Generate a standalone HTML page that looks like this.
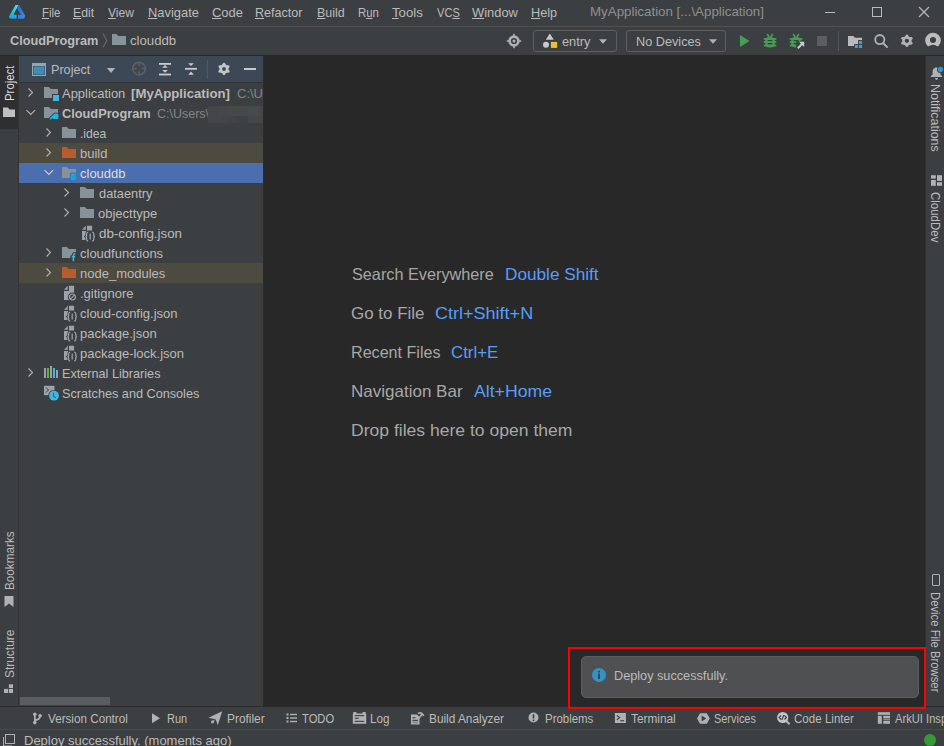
<!DOCTYPE html>
<html><head><meta charset="utf-8"><style>
html,body{margin:0;padding:0}
body{width:944px;height:746px;position:relative;overflow:hidden;background:#3c3f41;font-family:"Liberation Sans", sans-serif}
.r,.t,.s{position:absolute}
.r{box-sizing:border-box}
.t{white-space:nowrap;line-height:1}
.t u{text-decoration:underline;text-underline-offset:1px}
.vl{transform-origin:0 0;transform:rotate(-90deg)}
.vr{transform-origin:0 0;transform:rotate(90deg)}
</style></head><body>
<div class="r" style="left:0;top:0;width:944px;height:26px;background:#3c3f41"></div><div class="r" style="left:0;top:26px;width:944px;height:1px;background:#515151"></div><svg class="s" style="left:0;top:0" width="32" height="26" viewBox="0 0 32 26">
<defs><linearGradient id="lg1" x1="0" y1="0" x2="0" y2="1"><stop offset="0" stop-color="#45e3ee"/><stop offset="1" stop-color="#19a0d8"/></linearGradient>
<linearGradient id="lg2" x1="0" y1="0" x2="1" y2="1"><stop offset="0" stop-color="#2168d8"/><stop offset="1" stop-color="#3a8fe6"/></linearGradient></defs>
<path d="M15.6 5 L18.6 5 L13.4 14.8 L16.6 14.8 L16.6 18.8 L11.2 18.8 Q9 18.8 9 16.6 Z" fill="url(#lg1)"/>
<path d="M18.6 5 L19.2 5 L25 15.6 Q25 18.8 22.8 18.8 L18 18.8 L18 14.8 L21 14.8 L16.9 8.2 Z" fill="url(#lg2)"/>
</svg><div class="t" style="left:42.4px;top:5.80px;font-size:13px;color:#bbbbbb;transform-origin:0 0;transform:scaleX(0.8762);"><u>F</u>ile</div>
<div class="t" style="left:73.1px;top:5.80px;font-size:13px;color:#bbbbbb;transform-origin:0 0;transform:scaleX(0.9435);"><u>E</u>dit</div>
<div class="t" style="left:108.0px;top:5.80px;font-size:13px;color:#bbbbbb;transform-origin:0 0;transform:scaleX(0.9276);"><u>V</u>iew</div>
<div class="t" style="left:147.7px;top:5.80px;font-size:13px;color:#bbbbbb;transform-origin:0 0;transform:scaleX(0.9922);"><u>N</u>avigate</div>
<div class="t" style="left:211.8px;top:5.80px;font-size:13px;color:#bbbbbb;transform-origin:0 0;transform:scaleX(0.9935);"><u>C</u>ode</div>
<div class="t" style="left:255.2px;top:5.80px;font-size:13px;color:#bbbbbb;transform-origin:0 0;transform:scaleX(0.9640);"><u>R</u>efactor</div>
<div class="t" style="left:316.5px;top:5.80px;font-size:13px;color:#bbbbbb;transform-origin:0 0;transform:scaleX(0.9552);"><u>B</u>uild</div>
<div class="t" style="left:357.7px;top:5.80px;font-size:13px;color:#bbbbbb;transform-origin:0 0;transform:scaleX(0.8750);">R<u>u</u>n</div>
<div class="t" style="left:392.0px;top:5.80px;font-size:13px;color:#bbbbbb;transform-origin:0 0;transform:scaleX(1.0161);"><u>T</u>ools</div>
<div class="t" style="left:437.0px;top:5.80px;font-size:13px;color:#bbbbbb;transform-origin:0 0;transform:scaleX(0.8519);">VC<u>S</u></div>
<div class="t" style="left:472.1px;top:5.80px;font-size:13px;color:#bbbbbb;transform-origin:0 0;transform:scaleX(0.9915);"><u>W</u>indow</div>
<div class="t" style="left:531.1px;top:5.80px;font-size:13px;color:#bbbbbb;transform-origin:0 0;transform:scaleX(0.9741);"><u>H</u>elp</div>
<div class="t" style="left:589.5px;top:4.70px;font-size:13px;color:#8f8f8f;transform-origin:0 0;transform:scaleX(1.0245);">MyApplication [...\Application]</div>
<div class="r" style="left:825px;top:12px;width:10px;height:1px;background:#bbbbbb"></div><div class="r" style="left:872px;top:7px;width:10px;height:10px;border:1px solid #bbbbbb"></div><svg class="s" style="left:918px;top:6px" width="12" height="12" viewBox="0 0 12 12"><path d="M1 1 L11 11 M11 1 L1 11" stroke="#bbbbbb" stroke-width="1.1"/></svg><div class="r" style="left:0;top:27px;width:944px;height:28px;background:#3c3f41"></div><div class="t" style="left:9.5px;top:34.20px;font-size:13px;color:#bbbbbb;font-weight:bold;transform-origin:0 0;transform:scaleX(0.9778);">CloudProgram</div>
<svg class="s" style="left:100px;top:32px" width="10" height="18" viewBox="0 0 10 18"><path d="M3 1.5 L6.8 8.5 L3 15.5" fill="none" stroke="#64686b" stroke-width="1.2"/></svg><svg class="s" style="left:112px;top:34px" width="14" height="11" viewBox="0 0 14 11"><path d="M0 0 H4.5 L6.2 2 H14 V11 H0 Z" fill="#87939a"/></svg><div class="t" style="left:130.3px;top:34.20px;font-size:13px;color:#bbbbbb;transform-origin:0 0;transform:scaleX(1.0130);">clouddb</div>
<svg class="s" style="left:506px;top:33px" width="16" height="16" viewBox="0 0 16 16">
<circle cx="8" cy="8" r="4.4" fill="none" stroke="#afb1b3" stroke-width="2.6"/><circle cx="8" cy="8" r="1.5" fill="#afb1b3"/>
<rect x="7.2" y="0.8" width="1.6" height="2" fill="#afb1b3"/><rect x="7.2" y="13.2" width="1.6" height="2" fill="#afb1b3"/>
<rect x="0.8" y="7.2" width="2" height="1.6" fill="#afb1b3"/><rect x="13.2" y="7.2" width="2" height="1.6" fill="#afb1b3"/></svg><div class="r" style="left:533px;top:30px;width:84px;height:22px;border:1px solid #5e6060;border-radius:3px"></div><svg class="s" style="left:540px;top:32px" width="20" height="18" viewBox="0 0 20 18">
<path d="M9.8 1.6 L13.8 7.8 L5.8 7.8 Z" fill="#c9c9c9"/><circle cx="6" cy="12.8" r="3" fill="#c9c9c9"/><rect x="10.9" y="9.9" width="6.2" height="6" fill="#eec22e"/></svg><div class="t" style="left:562.3px;top:35.30px;font-size:13px;color:#bbbbbb;transform-origin:0 0;transform:scaleX(0.9828);">entry</div>
<svg class="s" style="left:598px;top:38px" width="10" height="7" viewBox="0 0 10 7"><path d="M1 1.2 H9 L5 5.8 Z" fill="#afb1b3"/></svg><div class="r" style="left:626px;top:30px;width:100px;height:22px;border:1px solid #5e6060;border-radius:3px"></div><div class="t" style="left:635.5px;top:35.30px;font-size:13px;color:#bbbbbb;transform-origin:0 0;transform:scaleX(0.9761);">No Devices</div>
<svg class="s" style="left:708px;top:38px" width="10" height="7" viewBox="0 0 10 7"><path d="M1 1.2 H9 L5 5.8 Z" fill="#afb1b3"/></svg><svg class="s" style="left:738px;top:33px" width="14" height="16" viewBox="0 0 14 16"><path d="M2 1.9 L11.5 8 L2 13.9 Z" fill="#499c54"/></svg><svg class="s" style="left:763px;top:33px" width="14" height="15" viewBox="0 0 14 15"><path d="M4.2 1 L6.2 4 M9.8 1 L7.8 4" stroke="#499c54" stroke-width="1.7"/>
<path d="M2.3 7 Q2.3 4 7 4 Q11.7 4 11.7 7 V11.5 Q11.7 14.5 7 14.5 Q2.3 14.5 2.3 11.5 Z" fill="#499c54"/>
<rect x="0.8" y="5.1" width="12.5" height="1.8" fill="#499c54"/><rect x="0.8" y="8.1" width="12.5" height="1.8" fill="#499c54"/><rect x="0.8" y="11.6" width="12.5" height="1.8" fill="#499c54"/>
<rect x="4.6" y="7" width="4.8" height="1.1" fill="#3c3f41"/><rect x="4.6" y="10" width="4.8" height="1.4" fill="#3c3f41"/></svg><svg class="s" style="left:789px;top:33px" width="18" height="17" viewBox="0 0 18 17"><path d="M4.2 1 L6.2 4 M9.8 1 L7.8 4" stroke="#499c54" stroke-width="1.7"/>
<path d="M2.3 7 Q2.3 4 7 4 Q11.7 4 11.7 7 V11.5 Q11.7 14.5 7 14.5 Q2.3 14.5 2.3 11.5 Z" fill="#499c54"/>
<rect x="0.8" y="5.1" width="12.5" height="1.8" fill="#499c54"/><rect x="0.8" y="8.1" width="12.5" height="1.8" fill="#499c54"/><rect x="0.8" y="11.6" width="12.5" height="1.8" fill="#499c54"/>
<rect x="4.6" y="7" width="4.8" height="1.1" fill="#3c3f41"/><rect x="4.6" y="10" width="4.8" height="1.4" fill="#3c3f41"/><path d="M7.2 8.2 H17 V17 H7.2 Z" fill="#3c3f41"/><path d="M8.8 15.2 L13.8 10.2" stroke="#c9c9c9" stroke-width="2"/><path d="M10 8.8 H15.2 V14 Z" fill="#c9c9c9"/></svg><div class="r" style="left:817px;top:36px;width:10px;height:10px;background:#5a5c5e"></div><div class="r" style="left:838px;top:31px;width:1px;height:20px;background:#54575a"></div><svg class="s" style="left:847px;top:35px" width="16" height="14" viewBox="0 0 16 14">
<path d="M1 0.9 H6.5 L7.8 2.8 H15.1 V4.9 H11.1 V8.9 H7.1 V11 H1 Z" fill="#b9babb"/>
<rect x="12" y="5.9" width="3.1" height="3" fill="#389fd6"/><rect x="7.9" y="9.9" width="3.1" height="3.1" fill="#389fd6"/><rect x="12" y="9.9" width="3.1" height="3.1" fill="#389fd6"/></svg><svg class="s" style="left:872px;top:33px" width="18" height="17" viewBox="0 0 18 17"><circle cx="7.8" cy="6.6" r="4.6" fill="none" stroke="#afb1b3" stroke-width="1.8"/><path d="M11 10 L15.6 14.6" stroke="#afb1b3" stroke-width="2"/></svg><svg class="s" style="left:898px;top:33px" width="18" height="16" viewBox="0 0 18 16"><circle cx="8.9" cy="7.8" r="4.72" fill="#afb1b3"/><circle cx="8.90" cy="2.89" r="1.39" fill="#afb1b3"/><path d="M8.90 7.80 L8.90 2.89" stroke="#afb1b3" stroke-width="2.77"/><circle cx="13.16" cy="5.34" r="1.39" fill="#afb1b3"/><path d="M8.90 7.80 L13.16 5.34" stroke="#afb1b3" stroke-width="2.77"/><circle cx="13.16" cy="10.26" r="1.39" fill="#afb1b3"/><path d="M8.90 7.80 L13.16 10.26" stroke="#afb1b3" stroke-width="2.77"/><circle cx="8.90" cy="12.71" r="1.39" fill="#afb1b3"/><path d="M8.90 7.80 L8.90 12.71" stroke="#afb1b3" stroke-width="2.77"/><circle cx="4.64" cy="10.26" r="1.39" fill="#afb1b3"/><path d="M8.90 7.80 L4.64 10.26" stroke="#afb1b3" stroke-width="2.77"/><circle cx="4.64" cy="5.34" r="1.39" fill="#afb1b3"/><path d="M8.90 7.80 L4.64 5.34" stroke="#afb1b3" stroke-width="2.77"/><circle cx="8.9" cy="7.8" r="2.1" fill="#3c3f41"/></svg><svg class="s" style="left:924px;top:32px" width="20" height="17" viewBox="0 0 20 17">
<circle cx="9" cy="8.6" r="7.8" fill="#bdbdbd"/><circle cx="9" cy="7.9" r="3" fill="#3c3f41"/>
<path d="M0 17 V14.6 H4.3 Q9 10.7 13.7 14.6 H18 V17 Z" fill="#3c3f41"/></svg><div class="r" style="left:0;top:55px;width:944px;height:1px;background:#282828"></div><div class="r" style="left:0;top:56px;width:18px;height:650px;background:#3c3f41"></div><div class="r" style="left:0;top:56px;width:18px;height:73px;background:#2d2f30"></div><div class="r" style="left:18px;top:56px;width:1px;height:650px;background:#323232"></div><div class="t" style="left:4px;top:101.00px;font-size:12px;color:#dedede;transform-origin:0 0;transform:rotate(-90deg) scaleX(0.9500)">Project</div>
<svg class="s" style="left:2px;top:106px" width="14" height="12" viewBox="0 0 14 12"><path d="M1 1.5 H6 L7.5 3.5 H13 V11 H1 Z" fill="#bfbfbf"/></svg><div class="t" style="left:3.5px;top:589.80px;font-size:12px;color:#bbbbbb;transform-origin:0 0;transform:rotate(-90deg) scaleX(0.9767)">Bookmarks</div>
<svg class="s" style="left:3px;top:595px" width="12" height="13" viewBox="0 0 12 13"><path d="M1.5 1 H10.5 V12 L6 8.5 L1.5 12 Z" fill="#afb1b3"/></svg><div class="t" style="left:3.5px;top:678.40px;font-size:12px;color:#bbbbbb;transform-origin:0 0;transform:rotate(-90deg) scaleX(0.9939)">Structure</div>
<svg class="s" style="left:3px;top:682px" width="12" height="12" viewBox="0 0 12 12"><rect x="5.9" y="2.3" width="4.1" height="3.7" fill="#afb1b3"/><rect x="1" y="6.9" width="4.1" height="4.1" fill="#afb1b3"/><rect x="5.9" y="6.9" width="4.1" height="4.1" fill="#afb1b3"/></svg><div class="r" style="left:19px;top:56px;width:244px;height:26px;background:#3d4856"></div><div class="r" style="left:19px;top:82px;width:244px;height:1px;background:#2f3133"></div><div class="r" style="left:19px;top:83px;width:244px;height:623px;background:#3c3f41"></div><div class="r" style="left:263px;top:56px;width:1px;height:650px;background:#2b2b2b"></div><svg class="s" style="left:31px;top:62px" width="16" height="15" viewBox="0 0 16 15"><rect x="1" y="1" width="14" height="13" fill="#9aa4ab"/><rect x="2" y="4" width="12" height="9" fill="#3d4856"/><rect x="2.5" y="4.5" width="11" height="8" fill="#3d8fb5"/></svg><div class="t" style="left:51.4px;top:62.80px;font-size:13px;color:#bbbbbb;transform-origin:0 0;transform:scaleX(0.9707);">Project</div>
<svg class="s" style="left:106px;top:67px" width="10" height="7" viewBox="0 0 10 7"><path d="M0.8 1 H9.2 L5 6 Z" fill="#afb1b3"/></svg><svg class="s" style="left:131px;top:61px" width="16" height="16" viewBox="0 0 16 16"><circle cx="8" cy="7.6" r="6.3" fill="none" stroke="#606060" stroke-width="1.5"/>
<path d="M8 1.3 V5 M8 10.2 V13.9 M1.7 7.6 H5.4 M10.6 7.6 H14.3" stroke="#606060" stroke-width="1.5"/></svg><svg class="s" style="left:158px;top:61px" width="14" height="16" viewBox="0 0 14 16"><rect x="1" y="2" width="12" height="1.8" fill="#c9c9c9"/><rect x="1" y="12.6" width="12" height="1.8" fill="#c9c9c9"/>
<path d="M4.2 6.8 L7 4.1 L9.8 6.8 Z M4.2 9 L7 11.7 L9.8 9 Z" fill="#c9c9c9"/></svg><svg class="s" style="left:184px;top:61px" width="14" height="16" viewBox="0 0 14 16"><rect x="1" y="6.9" width="12" height="1.8" fill="#c9c9c9"/>
<path d="M4.2 2.2 L7 5.1 L9.8 2.2 Z M4.2 13.7 L7 10.6 L9.8 13.7 Z" fill="#c9c9c9"/></svg><div class="r" style="left:207px;top:60px;width:1px;height:19px;background:#56585a"></div><svg class="s" style="left:215px;top:60px" width="18" height="17" viewBox="0 0 18 17"><circle cx="9" cy="9" r="4.65" fill="#c4c5c6"/><circle cx="9.00" cy="4.16" r="1.36" fill="#c4c5c6"/><path d="M9.00 9.00 L9.00 4.16" stroke="#c4c5c6" stroke-width="2.73"/><circle cx="13.19" cy="6.58" r="1.36" fill="#c4c5c6"/><path d="M9.00 9.00 L13.19 6.58" stroke="#c4c5c6" stroke-width="2.73"/><circle cx="13.19" cy="11.42" r="1.36" fill="#c4c5c6"/><path d="M9.00 9.00 L13.19 11.42" stroke="#c4c5c6" stroke-width="2.73"/><circle cx="9.00" cy="13.84" r="1.36" fill="#c4c5c6"/><path d="M9.00 9.00 L9.00 13.84" stroke="#c4c5c6" stroke-width="2.73"/><circle cx="4.81" cy="11.42" r="1.36" fill="#c4c5c6"/><path d="M9.00 9.00 L4.81 11.42" stroke="#c4c5c6" stroke-width="2.73"/><circle cx="4.81" cy="6.58" r="1.36" fill="#c4c5c6"/><path d="M9.00 9.00 L4.81 6.58" stroke="#c4c5c6" stroke-width="2.73"/><circle cx="9" cy="9" r="1.9" fill="#3d4856"/></svg><div class="r" style="left:244px;top:68px;width:12px;height:2px;background:#c9c9c9"></div><div class="r" style="left:19px;top:143px;width:244px;height:20px;background:#4d4a40"></div><div class="r" style="left:19px;top:263px;width:244px;height:20px;background:#4d4a40"></div><div class="r" style="left:19px;top:163px;width:244px;height:20px;background:#4b6eaf"></div><svg class="s" style="left:27px;top:83px" width="10" height="20" viewBox="0 0 10 20"><path d="M1.5 5.5 L5.5 9.5 L1.5 13.5" fill="none" stroke="#afb1b3" stroke-width="1.1"/></svg><svg class="s" style="left:44px;top:87px" width="16" height="15" viewBox="0 0 16 15"><path d="M0 0 H4.9 L6.9 2 H14 V11 H0 Z" fill="#87939a"/><rect x="8" y="7" width="7" height="7" fill="#3c3f41"/><rect x="9" y="8" width="6" height="6" fill="#40b6e0"/></svg><div class="t" style="left:62.2px;top:87.20px;font-size:13px;color:#bbbbbb;transform-origin:0 0;transform:scaleX(0.9953);">Application</div>
<div class="t" style="left:131.3px;top:87.20px;font-size:13px;color:#bbbbbb;font-weight:bold;transform-origin:0 0;transform:scaleX(1.0144);">[MyApplication]</div>
<div class="t" style="left:237px;top:87.20px;font-size:13px;color:#858585;">C:\U</div>
<svg class="s" style="left:25px;top:103px" width="12" height="20" viewBox="0 0 12 20"><path d="M1.5 7.2 L5.8 11.5 L10.1 7.2" fill="none" stroke="#afb1b3" stroke-width="1.1"/></svg><svg class="s" style="left:44px;top:107px" width="16" height="15" viewBox="0 0 16 15"><path d="M0 0 H4.9 L6.9 2 H14 V11 H0 Z" fill="#87939a"/><g fill="#3c3f41" stroke="#3c3f41" stroke-linecap="round"><path d="M6.4 11.8 L9.6 8.6" stroke-width="3.4"/><circle cx="12" cy="8.8" r="2.6" stroke-width="1.6"/><circle cx="9.6" cy="10.3" r="1.7" stroke-width="1.6"/></g><g fill="#18b8e6" stroke-linecap="round"><path d="M6.4 11.8 L9.6 8.6" stroke="#18b8e6" stroke-width="1.6"/><circle cx="12" cy="8.8" r="2.6"/><circle cx="9.6" cy="10.3" r="1.7"/><path d="M9.6 10.3 H14.3 V12 H9.6 Z"/></g></svg><div class="t" style="left:62.0px;top:107.20px;font-size:13px;color:#bbbbbb;font-weight:bold;transform-origin:0 0;transform:scaleX(0.9811);">CloudProgram</div>
<div class="t" style="left:157.3px;top:107.20px;font-size:13px;color:#858585;transform-origin:0 0;transform:scaleX(0.9599);">C:\Users\</div>
<div class="r" style="left:208px;top:106px;width:10px;height:10px;background:#434546"></div><div class="r" style="left:208px;top:116px;width:10px;height:7px;background:#434546"></div><div class="r" style="left:218px;top:106px;width:10px;height:10px;background:#45484a"></div><div class="r" style="left:218px;top:116px;width:10px;height:7px;background:#434647"></div><div class="r" style="left:228px;top:106px;width:10px;height:10px;background:#46494a"></div><div class="r" style="left:228px;top:116px;width:10px;height:7px;background:#414243"></div><div class="r" style="left:238px;top:106px;width:10px;height:10px;background:#46494b"></div><div class="r" style="left:238px;top:116px;width:10px;height:7px;background:#3e4143"></div><div class="r" style="left:248px;top:106px;width:10px;height:10px;background:#484b4c"></div><div class="r" style="left:248px;top:116px;width:10px;height:7px;background:#444749"></div><div class="r" style="left:258px;top:106px;width:5px;height:10px;background:#454749"></div><div class="r" style="left:258px;top:116px;width:5px;height:7px;background:#434546"></div><svg class="s" style="left:45px;top:123px" width="10" height="20" viewBox="0 0 10 20"><path d="M1.5 5.5 L5.5 9.5 L1.5 13.5" fill="none" stroke="#afb1b3" stroke-width="1.1"/></svg><svg class="s" style="left:62px;top:127px" width="16" height="15" viewBox="0 0 16 15"><path d="M0 0 H4.9 L6.9 2 H14 V11 H0 Z" fill="#87939a"/></svg><div class="t" style="left:80.4px;top:127.20px;font-size:13px;color:#bbbbbb;transform-origin:0 0;transform:scaleX(0.9310);">.idea</div>
<svg class="s" style="left:45px;top:143px" width="10" height="20" viewBox="0 0 10 20"><path d="M1.5 5.5 L5.5 9.5 L1.5 13.5" fill="none" stroke="#afb1b3" stroke-width="1.1"/></svg><svg class="s" style="left:62px;top:147px" width="16" height="15" viewBox="0 0 16 15"><path d="M0 0 H4.9 L6.9 2 H14 V11 H0 Z" fill="#b85b2e"/></svg><div class="t" style="left:80px;top:147.20px;font-size:13px;color:#bbbbbb;">build</div>
<svg class="s" style="left:43px;top:163px" width="12" height="20" viewBox="0 0 12 20"><path d="M1.5 7.2 L5.8 11.5 L10.1 7.2" fill="none" stroke="#d0d0d0" stroke-width="1.1"/></svg><svg class="s" style="left:62px;top:167px" width="16" height="15" viewBox="0 0 16 15"><path d="M0 0 H4.9 L6.9 2 H14 V11 H0 Z" fill="#87939a"/><rect x="7.8" y="5.6" width="7.2" height="8.4" rx="2" fill="#4b6eaf"/><ellipse cx="11.3" cy="7.9" rx="2.5" ry="1.2" fill="#00b7e8"/><rect x="8.8" y="7.9" width="5" height="4.1" fill="#00b7e8"/><ellipse cx="11.3" cy="12" rx="2.5" ry="1.1" fill="#00b7e8"/><path d="M8.9 9 Q11.3 10.3 13.7 9 M8.9 10.7 Q11.3 12 13.7 10.7" fill="none" stroke="#4b6eaf" stroke-width="0.6" opacity="0.6"/></svg><div class="t" style="left:80px;top:167.20px;font-size:13px;color:#dddddd;">clouddb</div>
<svg class="s" style="left:63px;top:183px" width="10" height="20" viewBox="0 0 10 20"><path d="M1.5 5.5 L5.5 9.5 L1.5 13.5" fill="none" stroke="#afb1b3" stroke-width="1.1"/></svg><svg class="s" style="left:80px;top:187px" width="16" height="15" viewBox="0 0 16 15"><path d="M0 0 H4.9 L6.9 2 H14 V11 H0 Z" fill="#87939a"/></svg><div class="t" style="left:98.7px;top:187.20px;font-size:13px;color:#bbbbbb;transform-origin:0 0;transform:scaleX(0.9855);">dataentry</div>
<svg class="s" style="left:63px;top:203px" width="10" height="20" viewBox="0 0 10 20"><path d="M1.5 5.5 L5.5 9.5 L1.5 13.5" fill="none" stroke="#afb1b3" stroke-width="1.1"/></svg><svg class="s" style="left:80px;top:207px" width="16" height="15" viewBox="0 0 16 15"><path d="M0 0 H4.9 L6.9 2 H14 V11 H0 Z" fill="#87939a"/></svg><div class="t" style="left:98px;top:207.20px;font-size:13px;color:#bbbbbb;">objecttype</div>
<svg class="s" style="left:81px;top:225px" width="17" height="18" viewBox="0 0 17 18"><path d="M6 0.8 H11.1 V15 H1 V6 H6 Z" fill="#9aa3a9"/><path d="M1 4.8 L4.8 0.8 V4.8 Z" fill="#9aa3a9"/><path d="M7.2 5.6 H11.2 Q14 5.6 14 9 V10 L15.6 11.5 L14 13 V14 Q14 17.4 11.2 17.4 H7.2 Q4.4 17.4 4.4 14 V13 L2.8 11.5 L4.4 10 V9 Q4.4 5.6 7.2 5.6 Z" fill="#3c3f41"/><path d="M7.2 7 Q5.6 7 5.6 9 V10.5 Q5.6 11.5 4.4 11.5 Q5.6 11.5 5.6 12.5 V14 Q5.6 16 7.2 16 M11.2 7 Q12.8 7 12.8 9 V10.5 Q12.8 11.5 14 11.5 Q12.8 11.5 12.8 12.5 V14 Q12.8 16 11.2 16 M9.2 8.6 V14.4" fill="none" stroke="#9aa3a9" stroke-width="1.25"/></svg><div class="t" style="left:98.7px;top:227.20px;font-size:13px;color:#bbbbbb;transform-origin:0 0;transform:scaleX(1.0259);">db-config.json</div>
<svg class="s" style="left:45px;top:243px" width="10" height="20" viewBox="0 0 10 20"><path d="M1.5 5.5 L5.5 9.5 L1.5 13.5" fill="none" stroke="#afb1b3" stroke-width="1.1"/></svg><svg class="s" style="left:62px;top:247px" width="16" height="15" viewBox="0 0 16 15"><path d="M0 0 H4.9 L6.9 2 H14 V11 H0 Z" fill="#87939a"/><path d="M11.4 14.2 V9 Q11.4 6.8 13.4 6.8 M9.8 9.7 H13.2" fill="none" stroke="#3c3f41" stroke-width="3.4" stroke-linecap="round"/><path d="M11.4 14.2 V9 Q11.4 6.8 13.4 6.8 M9.8 9.7 H13.2" fill="none" stroke="#40b6e0" stroke-width="1.5"/></svg><div class="t" style="left:80px;top:247.20px;font-size:13px;color:#bbbbbb;">cloudfunctions</div>
<svg class="s" style="left:45px;top:263px" width="10" height="20" viewBox="0 0 10 20"><path d="M1.5 5.5 L5.5 9.5 L1.5 13.5" fill="none" stroke="#afb1b3" stroke-width="1.1"/></svg><svg class="s" style="left:62px;top:267px" width="16" height="15" viewBox="0 0 16 15"><path d="M0 0 H4.9 L6.9 2 H14 V11 H0 Z" fill="#b85b2e"/></svg><div class="t" style="left:80px;top:267.20px;font-size:13px;color:#bbbbbb;">node_modules</div>
<svg class="s" style="left:63px;top:285px" width="17" height="18" viewBox="0 0 17 18"><path d="M6 0.8 H11.1 V15 H1 V6 H6 Z" fill="#9aa3a9"/><path d="M1 4.8 L4.8 0.8 V4.8 Z" fill="#9aa3a9"/><circle cx="9.4" cy="12" r="4.6" fill="#3c3f41"/><circle cx="9.4" cy="12" r="3" fill="none" stroke="#9aa3a9" stroke-width="1.2"/><path d="M7.3 14.1 L11.5 9.9" stroke="#9aa3a9" stroke-width="1.2"/></svg><div class="t" style="left:80px;top:287.20px;font-size:13px;color:#bbbbbb;">.gitignore</div>
<svg class="s" style="left:63px;top:305px" width="17" height="18" viewBox="0 0 17 18"><path d="M6 0.8 H11.1 V15 H1 V6 H6 Z" fill="#9aa3a9"/><path d="M1 4.8 L4.8 0.8 V4.8 Z" fill="#9aa3a9"/><path d="M7.2 5.6 H11.2 Q14 5.6 14 9 V10 L15.6 11.5 L14 13 V14 Q14 17.4 11.2 17.4 H7.2 Q4.4 17.4 4.4 14 V13 L2.8 11.5 L4.4 10 V9 Q4.4 5.6 7.2 5.6 Z" fill="#3c3f41"/><path d="M7.2 7 Q5.6 7 5.6 9 V10.5 Q5.6 11.5 4.4 11.5 Q5.6 11.5 5.6 12.5 V14 Q5.6 16 7.2 16 M11.2 7 Q12.8 7 12.8 9 V10.5 Q12.8 11.5 14 11.5 Q12.8 11.5 12.8 12.5 V14 Q12.8 16 11.2 16 M9.2 8.6 V14.4" fill="none" stroke="#9aa3a9" stroke-width="1.25"/></svg><div class="t" style="left:80px;top:307.20px;font-size:13px;color:#bbbbbb;">cloud-config.json</div>
<svg class="s" style="left:63px;top:325px" width="17" height="18" viewBox="0 0 17 18"><path d="M6 0.8 H11.1 V15 H1 V6 H6 Z" fill="#9aa3a9"/><path d="M1 4.8 L4.8 0.8 V4.8 Z" fill="#9aa3a9"/><path d="M7.2 5.6 H11.2 Q14 5.6 14 9 V10 L15.6 11.5 L14 13 V14 Q14 17.4 11.2 17.4 H7.2 Q4.4 17.4 4.4 14 V13 L2.8 11.5 L4.4 10 V9 Q4.4 5.6 7.2 5.6 Z" fill="#3c3f41"/><path d="M7.2 7 Q5.6 7 5.6 9 V10.5 Q5.6 11.5 4.4 11.5 Q5.6 11.5 5.6 12.5 V14 Q5.6 16 7.2 16 M11.2 7 Q12.8 7 12.8 9 V10.5 Q12.8 11.5 14 11.5 Q12.8 11.5 12.8 12.5 V14 Q12.8 16 11.2 16 M9.2 8.6 V14.4" fill="none" stroke="#9aa3a9" stroke-width="1.25"/></svg><div class="t" style="left:80px;top:327.20px;font-size:13px;color:#bbbbbb;">package.json</div>
<svg class="s" style="left:63px;top:345px" width="17" height="18" viewBox="0 0 17 18"><path d="M6 0.8 H11.1 V15 H1 V6 H6 Z" fill="#9aa3a9"/><path d="M1 4.8 L4.8 0.8 V4.8 Z" fill="#9aa3a9"/><path d="M7.2 5.6 H11.2 Q14 5.6 14 9 V10 L15.6 11.5 L14 13 V14 Q14 17.4 11.2 17.4 H7.2 Q4.4 17.4 4.4 14 V13 L2.8 11.5 L4.4 10 V9 Q4.4 5.6 7.2 5.6 Z" fill="#3c3f41"/><path d="M7.2 7 Q5.6 7 5.6 9 V10.5 Q5.6 11.5 4.4 11.5 Q5.6 11.5 5.6 12.5 V14 Q5.6 16 7.2 16 M11.2 7 Q12.8 7 12.8 9 V10.5 Q12.8 11.5 14 11.5 Q12.8 11.5 12.8 12.5 V14 Q12.8 16 11.2 16 M9.2 8.6 V14.4" fill="none" stroke="#9aa3a9" stroke-width="1.25"/></svg><div class="t" style="left:80px;top:347.20px;font-size:13px;color:#bbbbbb;">package-lock.json</div>
<svg class="s" style="left:27px;top:363px" width="10" height="20" viewBox="0 0 10 20"><path d="M1.5 5.5 L5.5 9.5 L1.5 13.5" fill="none" stroke="#afb1b3" stroke-width="1.1"/></svg><svg class="s" style="left:43px;top:365px" width="17" height="14" viewBox="0 0 17 14">
<rect x="1" y="3" width="2" height="10" fill="#9aa2a8"/><rect x="4" y="3" width="2" height="10" fill="#62b543"/><rect x="7" y="1" width="2" height="12" fill="#9aa2a8"/><rect x="10" y="3" width="2" height="10" fill="#40b6e0"/><rect x="13" y="5" width="2" height="8" fill="#9aa2a8"/></svg><div class="t" style="left:62.4px;top:367.20px;font-size:13px;color:#bbbbbb;transform-origin:0 0;transform:scaleX(0.9735);">External Libraries</div>
<svg class="s" style="left:43px;top:385px" width="18" height="17" viewBox="0 0 18 17">
<rect x="1" y="0.8" width="10.5" height="9.4" fill="#9aa4ab"/><path d="M3 2.5 L5.5 5 L3 7.5" fill="none" stroke="#3c3f41" stroke-width="1"/>
<circle cx="11" cy="10.7" r="5.8" fill="#3c3f41"/><circle cx="11" cy="10.7" r="4.9" fill="#40b6e0"/><path d="M10.5 7.8 V11.2 L12.8 13" fill="none" stroke="#2e6f8a" stroke-width="1.1"/></svg><div class="t" style="left:62.4px;top:387.20px;font-size:13px;color:#bbbbbb;transform-origin:0 0;transform:scaleX(0.9745);">Scratches and Consoles</div>
<div class="r" style="left:20px;top:697px;width:90px;height:8px;background:#5a5d5f"></div><div class="r" style="left:264px;top:56px;width:661px;height:650px;background:#282828"></div><div class="t" style="left:351.9px;top:265.53px;font-size:16.5px;color:#a7a7a7;transform-origin:0 0;transform:scaleX(0.9847);">Search Everywhere</div>
<div class="t" style="left:504.7px;top:265.53px;font-size:16.5px;color:#589df6;transform-origin:0 0;transform:scaleX(1.0411);">Double Shift</div>
<div class="t" style="left:351.0px;top:304.63px;font-size:16.5px;color:#a7a7a7;transform-origin:0 0;transform:scaleX(1.0264);">Go to File</div>
<div class="t" style="left:435.3px;top:304.63px;font-size:16.5px;color:#589df6;transform-origin:0 0;transform:scaleX(1.0922);">Ctrl+Shift+N</div>
<div class="t" style="left:351.0px;top:343.83px;font-size:16.5px;color:#a7a7a7;transform-origin:0 0;transform:scaleX(0.9761);">Recent Files</div>
<div class="t" style="left:451.0px;top:343.83px;font-size:16.5px;color:#589df6;transform-origin:0 0;transform:scaleX(1.0196);">Ctrl+E</div>
<div class="t" style="left:351.0px;top:382.83px;font-size:16.5px;color:#a7a7a7;transform-origin:0 0;transform:scaleX(1.0312);">Navigation Bar</div>
<div class="t" style="left:473.9px;top:382.83px;font-size:16.5px;color:#589df6;transform-origin:0 0;transform:scaleX(1.0699);">Alt+Home</div>
<div class="t" style="left:351.0px;top:421.93px;font-size:16.5px;color:#a7a7a7;transform-origin:0 0;transform:scaleX(1.0635);">Drop files here to open them</div>
<div class="r" style="left:925px;top:56px;width:1px;height:650px;background:#323232"></div><div class="r" style="left:926px;top:56px;width:18px;height:650px;background:#3c3f41"></div><svg class="s" style="left:929px;top:66px" width="15" height="15" viewBox="0 0 15 15"><path d="M7.5 1.6 C4.6 1.6 3.6 4 3.6 6.5 V8.6 L1.8 10.3 V11 H13.2 V10.3 L11.4 8.6 V6.5 C11.4 4 10.4 1.6 7.5 1.6 Z" fill="#afb1b3"/><path d="M6 12.1 H9 Q9 13.9 7.5 13.9 Q6 13.9 6 12.1 Z" fill="#afb1b3"/><circle cx="11.5" cy="3.4" r="3.5" fill="#3c3f41"/><circle cx="11.5" cy="3.4" r="2.6" fill="#3592c4"/></svg><div class="t" style="left:941px;top:84.40px;font-size:12px;color:#bbbbbb;transform-origin:0 0;transform:rotate(90deg) scaleX(1.0354)">Notifications</div>
<svg class="s" style="left:930px;top:174px" width="13" height="13" viewBox="0 0 13 13"><rect x="1" y="1.2" width="4.8" height="3.4" fill="#afb1b3"/><rect x="7" y="1.2" width="5" height="5.7" fill="#afb1b3"/><rect x="1" y="6" width="4.8" height="5.8" fill="#afb1b3"/><rect x="7" y="8.2" width="5" height="3.6" fill="#afb1b3"/></svg><div class="t" style="left:941px;top:191.80px;font-size:12px;color:#bbbbbb;transform-origin:0 0;transform:rotate(90deg) scaleX(0.9566)">CloudDev</div>
<div class="r" style="left:932px;top:574px;width:8px;height:12px;border:1px solid #afb1b3;border-radius:1px"></div><div class="t" style="left:941px;top:592.30px;font-size:12px;color:#bbbbbb;transform-origin:0 0;transform:rotate(90deg) scaleX(0.9411)">Device File Browser</div>
<div class="r" style="left:581px;top:656px;width:338px;height:42px;background:#4e5052;border:1px solid #5a5c5e;border-radius:5px"></div><svg class="s" style="left:591px;top:667px" width="16" height="16" viewBox="0 0 16 16"><circle cx="8" cy="8" r="7" fill="#3592c4"/><rect x="7.1" y="6.6" width="1.8" height="5.4" fill="#3c3f41"/><rect x="7.1" y="3.8" width="1.8" height="1.8" fill="#3c3f41"/></svg><div class="t" style="left:613.6px;top:668.80px;font-size:13px;color:#bbbbbb;transform-origin:0 0;transform:scaleX(0.9761);">Deploy successfully.</div>
<div class="r" style="left:0;top:706px;width:944px;height:1px;background:#2b2b2b"></div><div class="r" style="left:0;top:707px;width:944px;height:22px;background:#3c3f41"></div><div class="r" style="left:0;top:729px;width:944px;height:1px;background:#4b4a48"></div><div class="r" style="left:0;top:730px;width:944px;height:16px;background:#3c3f41"></div><div class="t" style="left:48.4px;top:713.44px;font-size:12px;color:#bbbbbb;transform-origin:0 0;transform:scaleX(0.9732);">Version Control</div>
<div class="t" style="left:167.3px;top:713.44px;font-size:12px;color:#bbbbbb;transform-origin:0 0;transform:scaleX(0.9136);">Run</div>
<div class="t" style="left:227.4px;top:713.44px;font-size:12px;color:#bbbbbb;transform-origin:0 0;transform:scaleX(0.9921);">Profiler</div>
<div class="t" style="left:302.4px;top:713.44px;font-size:12px;color:#bbbbbb;transform-origin:0 0;transform:scaleX(0.9324);">TODO</div>
<div class="t" style="left:370.1px;top:713.44px;font-size:12px;color:#bbbbbb;transform-origin:0 0;transform:scaleX(0.9750);">Log</div>
<div class="t" style="left:429.2px;top:713.44px;font-size:12px;color:#bbbbbb;transform-origin:0 0;transform:scaleX(0.9868);">Build Analyzer</div>
<div class="t" style="left:544.5px;top:713.44px;font-size:12px;color:#bbbbbb;transform-origin:0 0;transform:scaleX(0.9529);">Problems</div>
<div class="t" style="left:631.0px;top:713.44px;font-size:12px;color:#bbbbbb;transform-origin:0 0;transform:scaleX(0.9867);">Terminal</div>
<div class="t" style="left:714.1px;top:713.44px;font-size:12px;color:#bbbbbb;transform-origin:0 0;transform:scaleX(0.9109);">Services</div>
<div class="t" style="left:794.2px;top:713.44px;font-size:12px;color:#bbbbbb;transform-origin:0 0;transform:scaleX(0.9645);">Code Linter</div>
<div class="t" style="left:895px;top:713.44px;font-size:12px;color:#bbbbbb;transform-origin:0 0;transform:scaleX(0.9314);">ArkUI Inspector</div>

<svg class="s" style="left:31px;top:712px" width="12" height="13" viewBox="0 0 12 13"><circle cx="3.8" cy="2.2" r="1.8" fill="#afb1b3"/><circle cx="3.8" cy="10.6" r="1.8" fill="#afb1b3"/><circle cx="9.1" cy="3.8" r="1.8" fill="#afb1b3"/><path d="M3.8 2.2 V10.6 M9.1 3.8 Q9.1 7.6 3.8 8.4" fill="none" stroke="#afb1b3" stroke-width="1.7"/></svg>
<svg class="s" style="left:151px;top:713px" width="10" height="11" viewBox="0 0 10 11"><path d="M1 0.2 L9 5.2 L1 10.2 Z" fill="#afb1b3"/></svg>
<svg class="s" style="left:208px;top:711px" width="15" height="15" viewBox="0 0 15 15"><path d="M0.5 6.8 L14.2 0.3 L9.8 14.2 L7.8 8.6 Z" fill="#afb1b3"/><path d="M3.4 9.6 L6.6 9.2 L5.6 12.3 L3 12.3 Z" fill="#afb1b3"/></svg>
<svg class="s" style="left:286px;top:713px" width="12" height="10" viewBox="0 0 12 10"><rect x="0.5" y="0.5" width="2" height="2" fill="#afb1b3"/><rect x="4" y="0.8" width="7" height="1.4" fill="#afb1b3"/><rect x="0.5" y="4" width="2" height="2" fill="#afb1b3"/><rect x="4" y="4.3" width="7" height="1.4" fill="#afb1b3"/><rect x="0.5" y="7.5" width="2" height="2" fill="#afb1b3"/><rect x="4" y="7.8" width="7" height="1.4" fill="#afb1b3"/></svg>
<svg class="s" style="left:352px;top:711px" width="15" height="14" viewBox="0 0 15 14"><rect x="0.8" y="2.4" width="13.4" height="10.4" rx="0.6" fill="#afb1b3"/><rect x="1.2" y="1" width="3.4" height="2" rx="0.8" fill="#afb1b3"/><rect x="10.4" y="1" width="3.4" height="2" rx="0.8" fill="#afb1b3"/><rect x="2.8" y="4.1" width="9.4" height="1.1" fill="#3c3f41"/><rect x="2.8" y="6.7" width="4" height="1.1" fill="#3c3f41"/><rect x="2.8" y="9.8" width="9.4" height="1.1" fill="#3c3f41"/></svg>
<svg class="s" style="left:410px;top:711px" width="15" height="15" viewBox="0 0 15 15"><path d="M1 3.5 H7 L9.5 6 V13.6 H1 Z" fill="#afb1b3"/><rect x="2.5" y="6.2" width="3" height="1.1" fill="#3c3f41"/><rect x="2.5" y="8.8" width="5.5" height="1.1" fill="#3c3f41"/><rect x="2.5" y="10.4" width="5.5" height="2" fill="#8a8c8e"/><path d="M8.6 7.6 L12.4 3" stroke="#afb1b3" stroke-width="1.6"/><path d="M8 2.4 Q11.2 0.6 14 4.8" fill="none" stroke="#afb1b3" stroke-width="1.5"/></svg>
<svg class="s" style="left:528px;top:712px" width="12" height="12" viewBox="0 0 12 12"><circle cx="5.5" cy="5.5" r="5" fill="#afb1b3"/><rect x="4.7" y="2.3" width="1.6" height="4.2" fill="#3c3f41"/><rect x="4.7" y="7.5" width="1.6" height="1.6" fill="#3c3f41"/></svg>
<svg class="s" style="left:614px;top:711px" width="13" height="13" viewBox="0 0 13 13"><rect x="0.9" y="2" width="11" height="10" fill="#afb1b3"/><path d="M2.9 4.4 L5.6 6.6 L2.9 8.8" fill="none" stroke="#3c3f41" stroke-width="1.2"/><rect x="6.2" y="9.2" width="3.8" height="1.1" fill="#3c3f41"/></svg>
<svg class="s" style="left:696px;top:712px" width="15" height="13" viewBox="0 0 15 13"><path d="M1 6.5 L4 1.3 H10.8 L13.8 6.5 L10.8 11.7 H4 Z" fill="#afb1b3"/><path d="M5.6 3.6 L10.2 6.5 L5.6 9.4 Z" fill="#3c3f41"/></svg>
<svg class="s" style="left:776px;top:711px" width="15" height="15" viewBox="0 0 15 15"><path d="M10 9.8 L13.6 13.3" stroke="#afb1b3" stroke-width="2.2"/><circle cx="6.7" cy="6.5" r="5.6" fill="#c4c5c6"/><path d="M5 4.5 L3.1 6.5 L5 8.5 M7.8 4 L5.8 9 M8.5 4.5 L10.4 6.5 L8.5 8.5" fill="none" stroke="#3c3f41" stroke-width="1.1"/></svg>
<svg class="s" style="left:877px;top:712px" width="14" height="13" viewBox="0 0 14 13"><rect x="0.8" y="0.2" width="12.2" height="2.6" fill="#afb1b3"/><rect x="0.8" y="3.8" width="4" height="8" fill="#afb1b3"/><rect x="6.3" y="3.8" width="6.7" height="2.6" fill="#afb1b3"/><rect x="6.3" y="7" width="6.7" height="1.4" fill="#8c8e90"/><rect x="6.3" y="9" width="6.7" height="2.8" fill="#afb1b3"/></svg>
<svg class="s" style="left:2px;top:733px" width="14" height="13" viewBox="0 0 14 13"><rect x="3.5" y="1.5" width="9" height="9" fill="none" stroke="#afb1b3" stroke-width="1"/><path d="M1.5 4 V13 H10" fill="none" stroke="#afb1b3" stroke-width="1"/></svg><div class="t" style="left:24.2px;top:733.60px;font-size:13px;color:#bbbbbb;transform-origin:0 0;transform:scaleX(0.9986);">Deploy successfully. (moments ago)</div>
<div class="r" style="left:924px;top:734px;width:12px;height:12px;border-radius:50%;background:#359a36"></div><div class="r" style="left:568px;top:647px;width:358px;height:62px;border:2px solid #ff0000;box-sizing:border-box"></div>
</body></html>
